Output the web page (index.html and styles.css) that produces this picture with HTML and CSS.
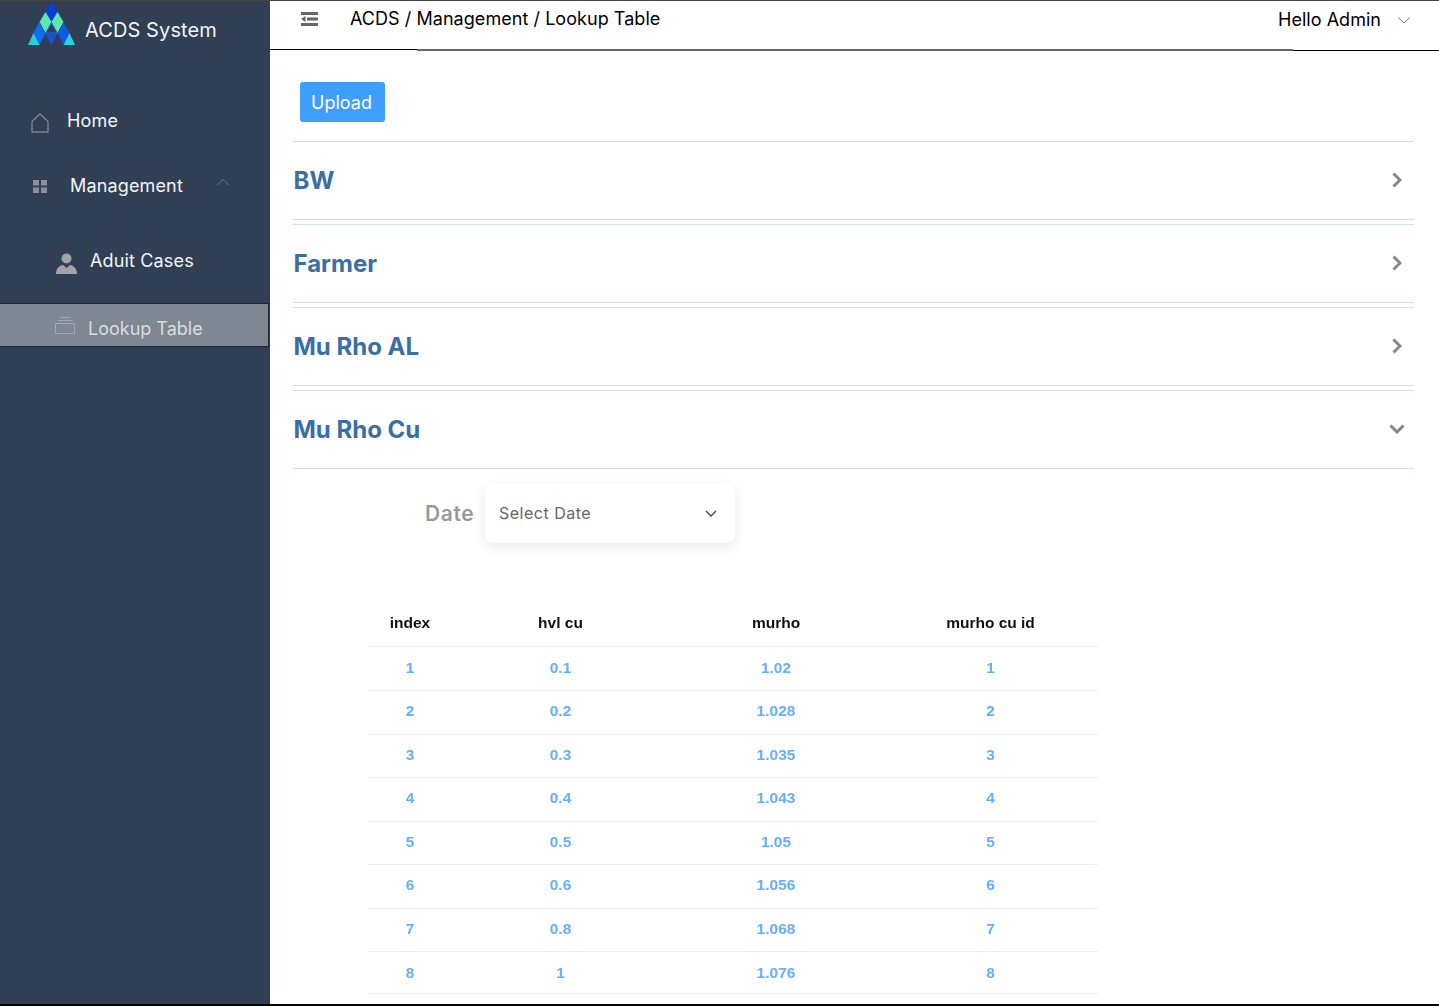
FILE: index.html
```html
<!DOCTYPE html>
<html lang="en">
<head>
<meta charset="utf-8">
<title>ACDS System</title>
<link rel="stylesheet" href="styles.css">
</head>
<body>
<div class="app">
  <aside class="sidebar">
    <div class="brand">
      <svg class="logo" width="47" height="45" viewBox="0 0 47 45">
        <polygon points="23.500,0 29.500,11 23.500,21 17.500,11" fill="#0a3fd6"/>
        <polygon points="17.500,11 23.500,21 17.500,32 11.500,21" fill="#5ce8b0"/>
        <polygon points="29.500,11 35.500,21 29.500,32 23.500,21" fill="#5ce8b0"/>
        <polygon points="11.500,21 17.500,32 11.500,44 5.500,32" fill="#0f6bf0"/>
        <polygon points="35.500,21 41.500,32 35.500,44 29.500,32" fill="#0f58e0"/>
        <polygon points="5.500,32 11.500,44 0,44" fill="#27d0dc"/>
        <polygon points="41.500,32 47,44 35.500,44" fill="#27d0dc"/>
        <polygon points="17.500,32 29.500,32 23.500,44" fill="#1450d8"/>
        <polygon points="23.500,21 29.500,32 17.500,32" fill="#1a6ce8"/>
        <polygon points="23.500,23 28.500,31.500 18.500,31.500" fill="#303f54"/>
      </svg>
      <span class="brand-name">ACDS System</span>
    </div>
    <nav class="menu">
      <a class="item item-home">
        <svg class="icon" width="18" height="20" viewBox="0 0 18 20"><path d="M1 8.500 9 1l8 7.500V19H1z" fill="none" stroke="#7b838f" stroke-width="1.400" stroke-linejoin="round"/></svg>
        <span>Home</span>
      </a>
      <a class="item item-manage">
        <svg class="icon" width="14" height="13" viewBox="0 0 14 13"><path fill="#8b919a" d="M0 0h6v5.500H0zM8 0h6v5.500H8zM0 7.500h6V13H0zM8 7.500h6V13H8z"/></svg>
        <span>Management</span>
        <svg class="caret" width="14" height="8" viewBox="0 0 14 8"><path d="M1 7l6-5.500L13 7" fill="none" stroke="#6a7585" stroke-width="1"/></svg>
      </a>
      <a class="item item-sub">
        <svg class="icon" width="21" height="21" viewBox="0 0 21 21"><circle cx="10.500" cy="5.500" r="5" fill="#a0a3a8"/><path fill="#a0a3a8" d="M0 21c0-5 3-8.500 7-9l3.500 3 3.500-3c4 .5 7 4 7 9z"/></svg>
        <span>Aduit Cases</span>
      </a>
      <a class="item item-active">
        <svg class="icon" width="20" height="17" viewBox="0 0 20 17"><path d="M.5 6.500h19v10H.5zM2.500 3.500h15M4.500.5h11" fill="none" stroke="#a3a8b0" stroke-width="1"/></svg>
        <span>Lookup Table</span>
      </a>
    </nav>
  </aside>
  <main class="main">
    <header class="topbar">
      <svg class="fold" width="17" height="14" viewBox="0 0 17 14"><path fill="#666" d="M0 0h17v3H0zM6 5.500h11v3H6zM0 11h17v3H0zM0 7 4.500 4v6z"/></svg>
      <div class="crumbs">ACDS / Management / Lookup Table</div>
      <div class="user">Hello Admin</div>
      <svg class="user-caret" width="12" height="7" viewBox="0 0 12 7"><path d="M.5.500 6 6 11.500.500" fill="none" stroke="#7f8a99" stroke-width="1"/></svg>
    </header>
    <section class="content">
      <div class="upload-row"><button class="upload">Upload</button></div>
      <div class="panel"><h2>BW</h2><svg class="chev" width="10" height="16" viewBox="0 0 10 16"><path d="M1.500 1.500 8 8l-6.500 6.500" fill="none" stroke="#8a8587" stroke-width="3"/></svg></div>
      <div class="panel"><h2>Farmer</h2><svg class="chev" width="10" height="16" viewBox="0 0 10 16"><path d="M1.500 1.500 8 8l-6.500 6.500" fill="none" stroke="#8a8587" stroke-width="3"/></svg></div>
      <div class="panel"><h2>Mu Rho AL</h2><svg class="chev" width="10" height="16" viewBox="0 0 10 16"><path d="M1.500 1.500 8 8l-6.500 6.500" fill="none" stroke="#8a8587" stroke-width="3"/></svg></div>
      <div class="panel panel-open"><h2>Mu Rho Cu</h2><svg class="chev-down" width="16" height="10" viewBox="0 0 16 10"><path d="M1.500 1.500 8 8l6.500-6.500" fill="none" stroke="#8a8587" stroke-width="3"/></svg></div>
      <div class="filter">
        <label class="filter-label">Date</label>
        <div class="select">
          <span>Select Date</span>
          <svg width="12" height="7" viewBox="0 0 12 7"><path d="M1 1l5 5 5-5" fill="none" stroke="#444" stroke-width="1.300"/></svg>
        </div>
      </div>
      <table class="table">
        <thead><tr><th>index</th><th>hvl cu</th><th>murho</th><th>murho cu id</th></tr></thead>
        <tbody>
          <tr><td>1</td><td>0.1</td><td>1.02</td><td>1</td></tr>
          <tr><td>2</td><td>0.2</td><td>1.028</td><td>2</td></tr>
          <tr><td>3</td><td>0.3</td><td>1.035</td><td>3</td></tr>
          <tr><td>4</td><td>0.4</td><td>1.043</td><td>4</td></tr>
          <tr><td>5</td><td>0.5</td><td>1.05</td><td>5</td></tr>
          <tr><td>6</td><td>0.6</td><td>1.056</td><td>6</td></tr>
          <tr><td>7</td><td>0.8</td><td>1.068</td><td>7</td></tr>
          <tr><td>8</td><td>1</td><td>1.076</td><td>8</td></tr>
        </tbody>
      </table>
    </section>
  </main>
</div>
</body>
</html>
```
FILE: styles.css
```css
* { box-sizing: border-box; }
html, body { margin: 0; height: 100%; overflow: hidden; }
body { font-family: Inter, "Liberation Sans", sans-serif; background: #fff; color: #000; }
.app { display: flex; height: 1006px; border-top: 1px solid #444; border-bottom: 2px solid #000; }

.sidebar { width: 270px; flex: none; background: #303f54; color: #fff; }
.brand { display: flex; align-items: flex-start; height: 90px; padding-left: 28px; }
.logo { display: block; flex: none; }
.brand-name { margin: 16px 0 0 10px; font-size: 20px; line-height: 26px; letter-spacing: .1px; color: #f2f4f6; }
.menu { display: flex; flex-direction: column; }
.item { display: flex; align-items: center; font-size: 18px; line-height: 24px; letter-spacing: .15px; color: #f4f5f7; }
.item-home { height: 60px; padding-left: 31px; }
.item-home span { margin-left: 18px; }
.item-home .icon { margin-top: 4px; }
.item-manage { height: 70px; padding-left: 33px; }
.item-manage span { margin-left: 23px; }
.caret { margin: -8px 0 0 33px; }
.item-sub { height: 82px; padding-left: 56px; }
.item-sub span { margin-left: 13px; margin-top: -2px; }
.item-sub .icon { margin-top: 2px; }
.item-active { width: 269px; height: 44px; padding-left: 55px; background: #7f8793; border-top: 1px solid #1c2733; border-right: 1px solid #1c2733; border-bottom: 1px solid #1c2733; color: #d9dce0; letter-spacing: 0; }
.item-active span { margin-left: 13px; margin-top: 7px; }
.item-active .icon { margin-top: 1px; }

.main { flex: 1; min-width: 0; display: flex; flex-direction: column; }
.topbar {
  display: flex; align-items: flex-start; height: 50px; flex: none;
  background:
    linear-gradient(#000, #000) 0 48px / 147px 1px no-repeat,
    linear-gradient(#666, #666) 147px 48px / 876px 2px no-repeat,
    linear-gradient(#000, #000) 1023px 49px / 146px 1px no-repeat;
}
.fold { margin: 11px 0 0 31px; }
.crumbs { margin: 6px 0 0 32px; font-size: 18px; line-height: 24px; letter-spacing: .05px; }
.user { margin: 7px 0 0 auto; font-size: 18px; line-height: 24px; letter-spacing: .03px; }
.user-caret { margin: 16px 29px 0 17px; }

.content { flex: 1; padding: 0 25px 0 23px; }
.upload-row { height: 91px; padding: 31px 0 0 7px; border-bottom: 1px solid #d6deec; }
.upload { display: block; width: 85px; height: 40px; padding: 1px 2px 0 0; border: 0; border-radius: 3px; background: #409eff; color: #fff; font: 18px/24px Inter, sans-serif; }
.panel { display: flex; align-items: center; justify-content: space-between; height: 78px; margin-bottom: 4px; border-bottom: 1px solid #d6deec; padding-right: 12px; }
.panel + .panel { border-top: 1px solid #d6e0f4; height: 79px; }
.panel-open { margin-bottom: 0; }
.panel h2 { margin: 0 0 0 .5px; font-size: 24px; line-height: 30px; font-weight: 700; color: #3a6ea5; }
.chev { margin-top: -2px; }
.chev-down { margin: -2px -3px 0 0; }

.filter { display: flex; align-items: center; height: 90px; padding: 0 0 1px 132px; }
.filter-label { width: 49px; font: 600 21px/26px Inter, sans-serif; letter-spacing: .6px; color: #999; }
.select { display: flex; align-items: center; justify-content: space-between; width: 250px; height: 59px; margin-left: 11px; padding: 0 18px 0 14px; border-radius: 8px; background: #fff; box-shadow: 0 4px 14px rgba(0,0,0,.09); font: 16px/20px Inter, sans-serif; letter-spacing: .5px; color: #666; }
.select span { margin-top: -1px; }

.table { width: 730px; margin: 39px 0 0 75px; border-collapse: collapse; table-layout: fixed; font-family: "Liberation Sans", Arial, sans-serif; font-size: 15.500px; filter: blur(.4px); }
.table th:nth-child(1) { width: 84px; }
.table th:nth-child(2) { width: 217px; }
.table th:nth-child(3) { width: 214px; }
.table th, .table td { padding: 0; text-align: center; border-bottom: 1px solid #ebeef5; }
.table th { height: 48px; padding-top: 2px; font-weight: 700; color: #111; }
.table td { height: 43.500px; padding-bottom: 2px; font-weight: 700; color: #66aeff; }
.table tbody tr:first-child td { height: 44.500px; padding-bottom: 0; }
.table tbody tr:last-child td { height: 42px; padding-bottom: 0; }
```
